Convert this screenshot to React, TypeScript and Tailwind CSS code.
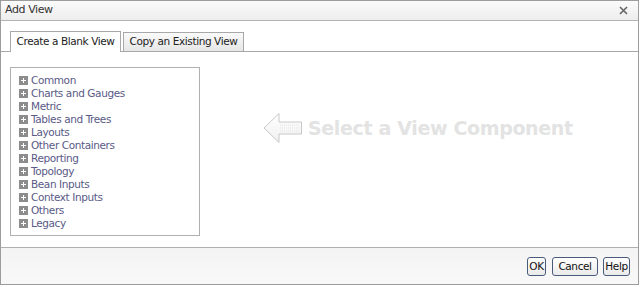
import React from "react";

const items = [
  "Common",
  "Charts and Gauges",
  "Metric",
  "Tables and Trees",
  "Layouts",
  "Other Containers",
  "Reporting",
  "Topology",
  "Bean Inputs",
  "Context Inputs",
  "Others",
  "Legacy",
];

function PlusBox() {
  return (
    <svg width="9" height="9" viewBox="0 0 9 9" className="shrink-0">
      <rect x="0" y="0" width="9" height="9" fill="#8c8c8c" />
      <rect x="2" y="4" width="5" height="1" fill="#ffffff" />
      <rect x="4" y="2" width="1" height="5" fill="#ffffff" />
    </svg>
  );
}

function Arrow() {
  return (
    <svg width="40" height="32" viewBox="0 0 40 32">
      <defs>
        <linearGradient id="ag" x1="0" y1="0" x2="0" y2="1">
          <stop offset="0" stopColor="#ffffff" />
          <stop offset="1" stopColor="#f0f0f0" />
        </linearGradient>
      </defs>
      <path
        d="M1 16 L16 1.5 L16 10 L38.5 10 L38.5 22 L16 22 L16 30.5 Z"
        fill="url(#ag)"
        stroke="#c8c8c8"
        strokeWidth="1"
      />
      <line x1="17" y1="13" x2="37" y2="13" stroke="#e2e2e2" strokeDasharray="1 1" />
      <line x1="17" y1="16" x2="37" y2="16" stroke="#e2e2e2" strokeDasharray="1 1" />
      <line x1="17" y1="19" x2="37" y2="19" stroke="#e2e2e2" strokeDasharray="1 1" />
    </svg>
  );
}

export default function App() {
  return (
    <div
      className="w-[640px] h-[287px] bg-white text-[10.5px] text-[#222]"
      style={{ fontFamily: '"DejaVu Sans", "Liberation Sans", sans-serif' }}
    >
      <div className="w-[639px] h-[285px] border border-[#9c9c9c] flex flex-col">
        <div className="h-[20px] shrink-0 border-b border-[#b4b4b4] bg-gradient-to-b from-[#fbfbfb] to-[#ededed] flex items-center justify-between pl-[4px] pr-[10px]">
          <span className="text-[11px] text-[#333] tracking-[-0.4px]">Add View</span>
          <svg width="9" height="9" viewBox="0 0 9 9">
            <path d="M1 1 L8 8 M8 1 L1 8" stroke="#666" strokeWidth="1.6" />
          </svg>
        </div>
        <div className="flex-1 flex flex-col pt-[10px]">
          <div className="flex items-end pl-[9px] gap-[2px] border-b border-[#a8a8a8] h-[21px]">
            <div className="h-[21px] w-[111px] mb-[-1px] border border-b-0 border-[#a8a8a8] bg-white flex items-center justify-center text-[#222] tracking-[-0.4px]">
              Create a Blank View
            </div>
            <div className="h-[19px] w-[121px] border border-b-0 border-[#a8a8a8] bg-gradient-to-b from-[#fafafa] to-[#e6e6e6] flex items-center justify-center text-[#222] tracking-[-0.4px]">
              Copy an Existing View
            </div>
          </div>
          <div className="flex-1 flex pl-[9px] pt-[15px]">
            <div className="w-[190px] h-[169px] border border-[#b0b0b0] pl-[8px] pt-[6px] flex flex-col">
              {items.map((t) => (
                <div key={t} className="h-[13px] flex items-center gap-[3px] text-[#5a5a86] tracking-[-0.4px] leading-[13px]">
                  <PlusBox />
                  <span>{t}</span>
                </div>
              ))}
            </div>
            <div className="flex items-start pl-[63px] pt-[45px] gap-[5px]">
              <Arrow />
              <span className="text-[19px] font-bold text-[#e3e3e3] leading-[32px] tracking-[-0.35px]">
                Select a View Component
              </span>
            </div>
          </div>
        </div>
        <div className="h-[37px] shrink-0 border-t border-[#b0b0b0] bg-gradient-to-b from-[#f4f4f4] to-[#f8f8f8] flex items-center justify-end pr-[8px] pt-[1px]">
          <button className="h-[19px] w-[19px] border border-[#4a5a7a] rounded-[3px] bg-gradient-to-b from-white to-[#eaeaea] text-[10.5px] text-[#111] tracking-[-0.4px] flex items-center justify-center">OK</button>
          <button className="ml-[6px] h-[19px] w-[46px] border border-[#4a5a7a] rounded-[3px] bg-gradient-to-b from-white to-[#eaeaea] text-[10.5px] text-[#111] tracking-[-0.4px] flex items-center justify-center">Cancel</button>
          <button className="ml-[5px] h-[19px] w-[27px] border border-[#4a5a7a] rounded-[3px] bg-gradient-to-b from-white to-[#eaeaea] text-[10.5px] text-[#111] tracking-[-0.4px] flex items-center justify-center">Help</button>
        </div>
      </div>
    </div>
  );
}
